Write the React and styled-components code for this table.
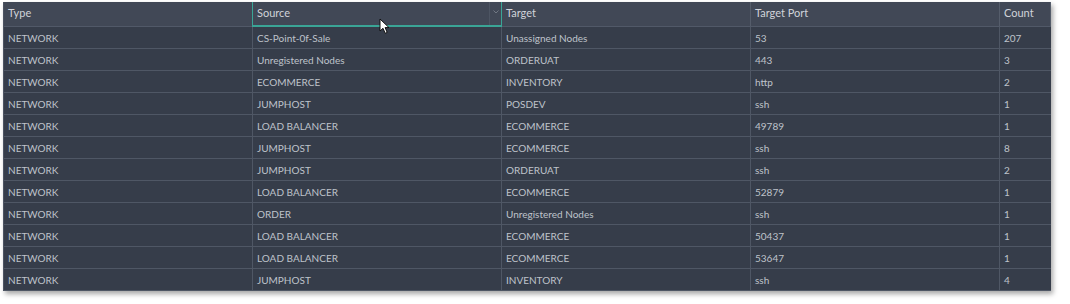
import React from 'react';
import styled, { createGlobalStyle } from 'styled-components';

const GlobalStyle = createGlobalStyle`
  html, body {
    margin: 0;
    padding: 0;
    background: #ffffff;
  }
  body {
    font-family: Lato, "Open Sans", sans-serif;
  }
`;

const Page = styled.div`
  width: 1070px;
  height: 304px;
  padding: 2px 0 0 3px;
  box-sizing: border-box;
  background: #ffffff;
`;

const Grid = styled.div`
  position: relative;
  width: 1047px;
  display: grid;
  grid-template-columns: 249px 249px 249px 249px 51px;
  background: #363d4a;
  border-left: 1px solid #4c5362;
  box-shadow: 2px 3px 5px rgba(0, 0, 0, 0.35);
`;

const HeadCell = styled.div`
  position: relative;
  height: 25px;
  box-sizing: border-box;
  display: flex;
  align-items: center;
  padding: 0 4px 3px;
  background: #414856;
  color: #d0d3d9;
  font-size: 11px;
  border-right: 1px solid ${p => (p.$active ? '#3aa596' : '#555d6b')};
  border-bottom: ${p => (p.$active ? '2px solid #3aa596' : '1px solid #515968')};
  border-left: ${p => (p.$active ? '1px solid #3aa596' : 'none')};
  margin-left: ${p => (p.$active ? '-1px' : '0')};
  &:last-child {
    border-right: none;
  }
`;

const Chevron = styled.span`
  position: absolute;
  right: 0;
  top: 0;
  bottom: 0;
  width: 12px;
  border-left: 1px solid #4d5563;
  display: flex;
  align-items: center;
  justify-content: center;
  padding-bottom: 4px;
  box-sizing: border-box;
`;

const Cell = styled.div`
  height: 22px;
  box-sizing: border-box;
  display: flex;
  align-items: center;
  padding: 0 4px 0;
  color: #bfc3ca;
  font-size: 10px;
  border-right: 1px solid #4f5765;
  border-bottom: 1px solid #4f5765;
  white-space: nowrap;
  overflow: hidden;
  &:nth-child(5n) {
    border-right: none;
  }
`;

const Pointer = styled.svg`
  position: absolute;
  left: 375px;
  top: 16px;
  pointer-events: none;
`;

const columns = ['Type', 'Source', 'Target', 'Target Port', 'Count'];

const rows = [
  ['NETWORK', 'CS-Point-0f-Sale', 'Unassigned Nodes', '53', '207'],
  ['NETWORK', 'Unregistered Nodes', 'ORDERUAT', '443', '3'],
  ['NETWORK', 'ECOMMERCE', 'INVENTORY', 'http', '2'],
  ['NETWORK', 'JUMPHOST', 'POSDEV', 'ssh', '1'],
  ['NETWORK', 'LOAD BALANCER', 'ECOMMERCE', '49789', '1'],
  ['NETWORK', 'JUMPHOST', 'ECOMMERCE', 'ssh', '8'],
  ['NETWORK', 'JUMPHOST', 'ORDERUAT', 'ssh', '2'],
  ['NETWORK', 'LOAD BALANCER', 'ECOMMERCE', '52879', '1'],
  ['NETWORK', 'ORDER', 'Unregistered Nodes', 'ssh', '1'],
  ['NETWORK', 'LOAD BALANCER', 'ECOMMERCE', '50437', '1'],
  ['NETWORK', 'LOAD BALANCER', 'ECOMMERCE', '53647', '1'],
  ['NETWORK', 'JUMPHOST', 'INVENTORY', 'ssh', '4'],
];

export default function App() {
  return (
    <>
      <GlobalStyle />
      <Page>
        <Grid>
          {columns.map(c => (
            <HeadCell key={c} $active={c === 'Source'}>
              {c}
              {c === 'Source' && (
                <Chevron>
                  <svg width="6" height="4" viewBox="0 0 6 4">
                    <path d="M0.5 0.5 L3 3 L5.5 0.5" fill="none" stroke="#7d8591" strokeWidth="0.8" />
                  </svg>
                </Chevron>
              )}
            </HeadCell>
          ))}
          {rows.map((r, i) =>
            r.map((v, j) => <Cell key={i + '-' + j}>{v}</Cell>)
          )}
          <Pointer width="12" height="17" viewBox="0 0 12 17">
            <path d="M1 1 L1 13 L4 10.3 L6.2 15.3 L8.2 14.4 L6.1 9.6 L10 9.6 Z" fill="#ffffff" stroke="#111111" strokeWidth="1" strokeLinejoin="round" />
          </Pointer>
        </Grid>
      </Page>
    </>
  );
}
